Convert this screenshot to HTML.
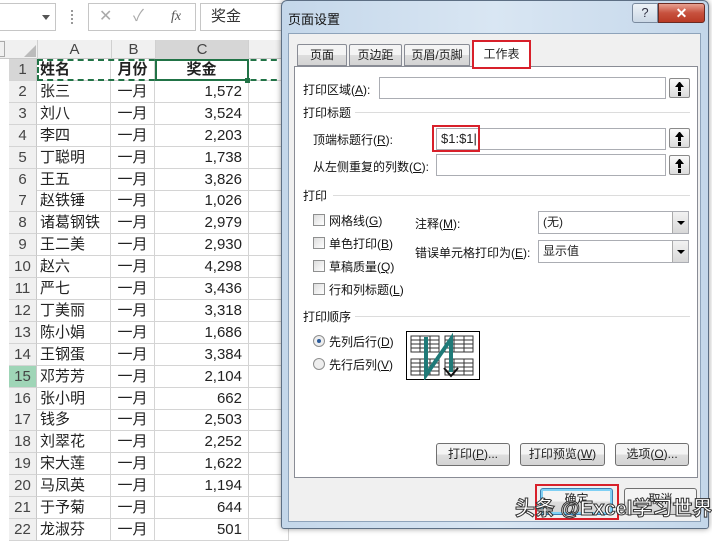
<!DOCTYPE html>
<html><head><meta charset="utf-8"><style>
*{margin:0;padding:0;box-sizing:border-box}
body{width:712px;height:533px;overflow:hidden;background:#fff;font-family:"Liberation Sans","Noto Sans CJK SC",sans-serif;position:relative;color:#222}
.a{position:absolute}
.grid div{position:absolute;font-size:15px;line-height:22px;height:22px;border-bottom:1px solid #d4d4d4;border-right:1px solid #d4d4d4}
.rh{left:9px;width:28px;background:#f0f0f0;text-align:center;color:#444;font-size:15px;border-right:1px solid #c8c8c8!important}
.ca{left:37px;width:74px;padding-left:3px}
.cb{left:111px;width:44px;text-align:center}
.cc{left:155px;width:94px;text-align:right;padding-right:6px}
.cd{left:249px;width:40px}
.dl{font-size:12px;font-family:"Liberation Sans","Noto Sans CJK SC",sans-serif;color:#111;position:absolute;white-space:nowrap}
.inp{position:absolute;background:#fff;border:1px solid #abadb3;height:22px}
.ub{position:absolute;width:21px;height:20px;border:1px solid #8a8a8a;border-radius:2px;background:linear-gradient(#fafafa,#dcdcdc)}
.ub:before{content:"";position:absolute;left:5px;top:3px;border:4px solid transparent;border-bottom:5px solid #000;border-top:0;width:1px}
.ub:after{content:"";position:absolute;left:8px;top:8px;width:3px;height:4px;background:#000;box-shadow:0 5px 0 -0px #000}
.cb2{position:absolute;width:12px;height:12px;border:1px solid #8e8f8f;background:linear-gradient(135deg,#ddd,#fff)}
.btn{position:absolute;height:23px;border:1px solid #707070;border-radius:3px;background:linear-gradient(#f4f4f4 50%,#dedede 50%,#d4d4d4);font-size:12px;text-align:center;line-height:21px}
.sel{position:absolute;background:#fff;border:1px solid #abadb3;height:23px;font-size:12px;line-height:21px;padding-left:4px}
.sel i{position:absolute;right:0;top:0;width:16px;height:21px;background:linear-gradient(#f2f2f2,#d8d8d8);border-left:1px solid #aaa}
.sel i:after{content:"";position:absolute;left:4px;top:9px;border:4px solid transparent;border-top:4px solid #000;border-bottom:0}
.sec{position:absolute;height:1px;background:#dcdcdc}
.rd{position:absolute;width:12px;height:12px;border-radius:50%;border:1px solid #8e8f8f;background:#eee}
</style></head><body>
<div class="a" style="left:0;top:0;width:712px;height:40px;background:#fff"></div>
<div class="a" style="left:0;top:3px;width:56px;height:28px;border:1px solid #c6c6c6;border-left:0;background:#fff"></div>
<div class="a" style="left:42px;top:15px;border:4px solid transparent;border-top:5px solid #555"></div>
<div class="a" style="left:71px;top:10px;width:2px;height:14px;border-left:2px dotted #999"></div>
<div class="a" style="left:88px;top:3px;width:108px;height:28px;border:1px solid #c6c6c6;background:#fff;color:#aaa;font-size:16px;line-height:26px"><span style="position:absolute;left:10px">✕</span><span style="position:absolute;left:44px">✓</span><span style="position:absolute;left:82px;font-style:italic;font-family:'Liberation Serif',serif;color:#555;font-size:14px">fx</span></div>
<div class="a" style="left:200px;top:3px;width:90px;height:28px;border:1px solid #c6c6c6;background:#fff;font-size:15px;line-height:26px;padding-left:10px;color:#333">奖金</div>
<div class="a" style="left:0;top:40px;width:290px;height:19px;background:#f0f0f0;border-bottom:1px solid #c8c8c8"></div>
<div class="a" style="left:0;top:41px;width:5px;height:16px;border:1px solid #aaa;border-left:0"></div>
<div class="a" style="left:24px;top:45px;border:6px solid transparent;border-right:6px solid #bbb;border-bottom:6px solid #bbb"></div>
<div class="a" style="left:37px;top:40px;width:74px;height:19px;text-align:center;font-size:15px;line-height:20px;color:#444;border-left:1px solid #d0d0d0">A</div>
<div class="a" style="left:111px;top:40px;width:44px;height:19px;text-align:center;font-size:15px;line-height:20px;color:#444;border-left:1px solid #d0d0d0">B</div>
<div class="a" style="left:155px;top:40px;width:94px;height:19px;text-align:center;font-size:15px;line-height:20px;color:#444;background:#d6d6d6;border-left:1px solid #d0d0d0;border-right:1px solid #d0d0d0">C</div>
<div class="a" style="left:0;top:59px;width:9px;height:480px;background:#fff"></div>
<div class="grid" id="g"></div>
<script>
var d=[["姓名","月份","奖金"],["张三","一月","1,572"],["刘八","一月","3,524"],["李四","一月","2,203"],["丁聪明","一月","1,738"],["王五","一月","3,826"],["赵铁锤","一月","1,026"],["诸葛钢铁","一月","2,979"],["王二美","一月","2,930"],["赵六","一月","4,298"],["严七","一月","3,436"],["丁美丽","一月","3,318"],["陈小娟","一月","1,686"],["王钢蛋","一月","3,384"],["邓芳芳","一月","2,104"],["张小明","一月","662"],["钱多","一月","2,503"],["刘翠花","一月","2,252"],["宋大莲","一月","1,622"],["马凤英","一月","1,194"],["于予菊","一月","644"],["龙淑芬","一月","501"]];
var h="";for(var i=0;i<d.length;i++){var t=59+i*21.9;var b=i==0?"font-weight:bold;":"";
h+='<div class="rh" style="top:'+t+'px;'+(i==14?'background:#9fd5b7;':'')+(i==0?'background:#d6d6d6;':'')+'">'+(i+1)+'</div>';
h+='<div class="ca" style="top:'+t+'px;'+b+'">'+d[i][0]+'</div><div class="cb" style="top:'+t+'px;'+b+'">'+d[i][1]+'</div><div class="cc" style="top:'+t+'px;'+b+(i==0?'text-align:center;padding:0':'')+'">'+d[i][2]+'</div><div class="cd" style="top:'+t+'px"></div>';}
document.getElementById("g").innerHTML=h;
</script>
<div class="a" style="left:37px;top:59px;width:250px;height:22px;border:2px dashed #217346;border-right:0"></div>
<div class="a" style="left:155px;top:59px;width:94px;height:22px;border:2px solid #217346"></div>
<div class="a" style="left:245px;top:78px;width:5px;height:5px;background:#217346"></div>
<div class="a" style="left:281px;top:0;width:428px;height:529px;background:linear-gradient(90deg,#c4d7ea,#d9e6f3 50%,#c4d7ea);border:1px solid #5d6f84;border-radius:6px 6px 3px 3px;box-shadow:0 0 6px rgba(0,0,0,.4)"></div>
<div class="dl" style="left:288px;top:9px;font-size:13px">页面设置</div>
<div class="a" style="left:632px;top:3px;width:26px;height:20px;border:1px solid #7a8a9e;border-radius:3px 0 0 3px;background:linear-gradient(#eef3f8,#cbd8e6);text-align:center;font-size:13px;color:#334;line-height:18px">?</div>
<div class="a" style="left:658px;top:3px;width:47px;height:20px;border:1px solid #6b2a22;border-radius:0 3px 3px 0;background:linear-gradient(#e8a292,#c7513e 50%,#b93a25);text-align:center;color:#fff;font-weight:bold;font-size:14px;line-height:18px">✕</div>
<div class="a" style="left:288px;top:33px;width:413px;height:489px;background:#f0f0f0;border:1px solid #8ea3ba"></div>
<div class="btn" style="left:297px;top:44px;width:50px;height:22px;border-radius:2px 2px 0 0;border-color:#898c95;line-height:20px">页面</div>
<div class="btn" style="left:349px;top:44px;width:53px;height:22px;border-radius:2px 2px 0 0;border-color:#898c95;line-height:20px">页边距</div>
<div class="btn" style="left:404px;top:44px;width:66px;height:22px;border-radius:2px 2px 0 0;border-color:#898c95;line-height:20px">页眉/页脚</div>
<div class="a" style="left:294px;top:66px;width:404px;height:412px;background:#fff;border:1px solid #898c95"></div>
<div class="a" style="left:473px;top:41px;width:57px;height:27px;background:#fff;border:1px solid #898c95;border-bottom:0;font-size:12px;text-align:center;line-height:25px">工作表</div>
<div class="a" style="left:472px;top:40px;width:59px;height:29px;border:2px solid #d8202a"></div>
<div class="dl" style="left:303px;top:81px">打印区域(<u>A</u>):</div>
<div class="inp" style="left:379px;top:77px;width:287px"></div>
<div class="ub" style="left:669px;top:78px"></div>
<div class="dl" style="left:303px;top:104px">打印标题</div><div class="sec" style="left:355px;top:112px;width:335px"></div>
<div class="dl" style="left:313px;top:131px">顶端标题行(<u>R</u>):</div>
<div class="inp" style="left:436px;top:128px;width:230px;font-size:13px;padding-left:4px;line-height:20px">$1:$1|</div>
<div class="a" style="left:432px;top:125px;width:48px;height:27px;border:2px solid #d8202a"></div>
<div class="ub" style="left:669px;top:128px"></div>
<div class="dl" style="left:313px;top:158px">从左侧重复的列数(<u>C</u>):</div>
<div class="inp" style="left:436px;top:154px;width:230px"></div>
<div class="ub" style="left:669px;top:155px"></div>
<div class="dl" style="left:303px;top:187px">打印</div><div class="sec" style="left:333px;top:195px;width:357px"></div>
<div class="cb2" style="left:313px;top:214px"></div><div class="dl" style="left:329px;top:212px">网格线(<u>G</u>)</div>
<div class="cb2" style="left:313px;top:237px"></div><div class="dl" style="left:329px;top:235px">单色打印(<u>B</u>)</div>
<div class="cb2" style="left:313px;top:260px"></div><div class="dl" style="left:329px;top:258px">草稿质量(<u>Q</u>)</div>
<div class="cb2" style="left:313px;top:283px"></div><div class="dl" style="left:329px;top:281px">行和列标题(<u>L</u>)</div>
<div class="dl" style="left:415px;top:215px">注释(<u>M</u>):</div>
<div class="sel" style="left:538px;top:211px;width:151px">(无)<i></i></div>
<div class="dl" style="left:415px;top:244px">错误单元格打印为(<u>E</u>):</div>
<div class="sel" style="left:538px;top:240px;width:151px">显示值<i></i></div>
<div class="dl" style="left:303px;top:308px">打印顺序</div><div class="sec" style="left:355px;top:316px;width:335px"></div>
<div class="rd" style="left:313px;top:335px"><div style="position:absolute;left:3px;top:3px;width:4px;height:4px;border-radius:50%;background:#2a5a9a"></div></div>
<div class="dl" style="left:329px;top:333px">先列后行(<u>D</u>)</div>
<div class="rd" style="left:313px;top:358px"></div>
<div class="dl" style="left:329px;top:356px">先行后列(<u>V</u>)</div>
<svg class="a" style="left:406px;top:331px" width="74" height="49" viewBox="0 0 74 49">
<rect x="0.5" y="0.5" width="73" height="48" fill="#fff" stroke="#000"/>
<g fill="none" stroke="#333" stroke-width="1">
<rect x="5" y="5" width="28" height="16"/><rect x="39" y="5" width="28" height="16"/><rect x="5" y="28" width="28" height="16"/><rect x="39" y="28" width="28" height="16"/>
<path d="M5 9h28M5 13h28M5 17h28M39 9h28M39 13h28M39 17h28M5 32h28M5 36h28M5 40h28M39 32h28M39 36h28M39 40h28M14 5v16M24 5v16M48 5v16M58 5v16M14 28v16M24 28v16M48 28v16M58 28v16"/></g>
<path d="M20 6v38L45 8v33" fill="none" stroke="#1f7a78" stroke-width="4"/>
<path d="M38 37l7 8 7-8" fill="none" stroke="#111" stroke-width="2"/>
</svg>
<div class="btn" style="left:436px;top:443px;width:74px">打印(<u>P</u>)...</div>
<div class="btn" style="left:520px;top:443px;width:85px">打印预览(<u>W</u>)</div>
<div class="btn" style="left:615px;top:443px;width:74px">选项(<u>O</u>)...</div>
<div class="btn" style="left:540px;top:488px;width:73px;height:27px;border-color:#3c7fb1;box-shadow:inset 0 0 0 2px #7fd0f4">确定</div>
<div class="a" style="left:535px;top:484px;width:84px;height:36px;border:2px solid #d8202a"></div>
<div class="btn" style="left:624px;top:488px;width:73px;height:27px">取消</div>
<div class="a" style="left:515px;top:492px;font-size:20px;color:#fff;-webkit-text-stroke:1px #333;font-weight:bold;white-space:nowrap">头条 @Excel学习世界</div>
</body></html>
